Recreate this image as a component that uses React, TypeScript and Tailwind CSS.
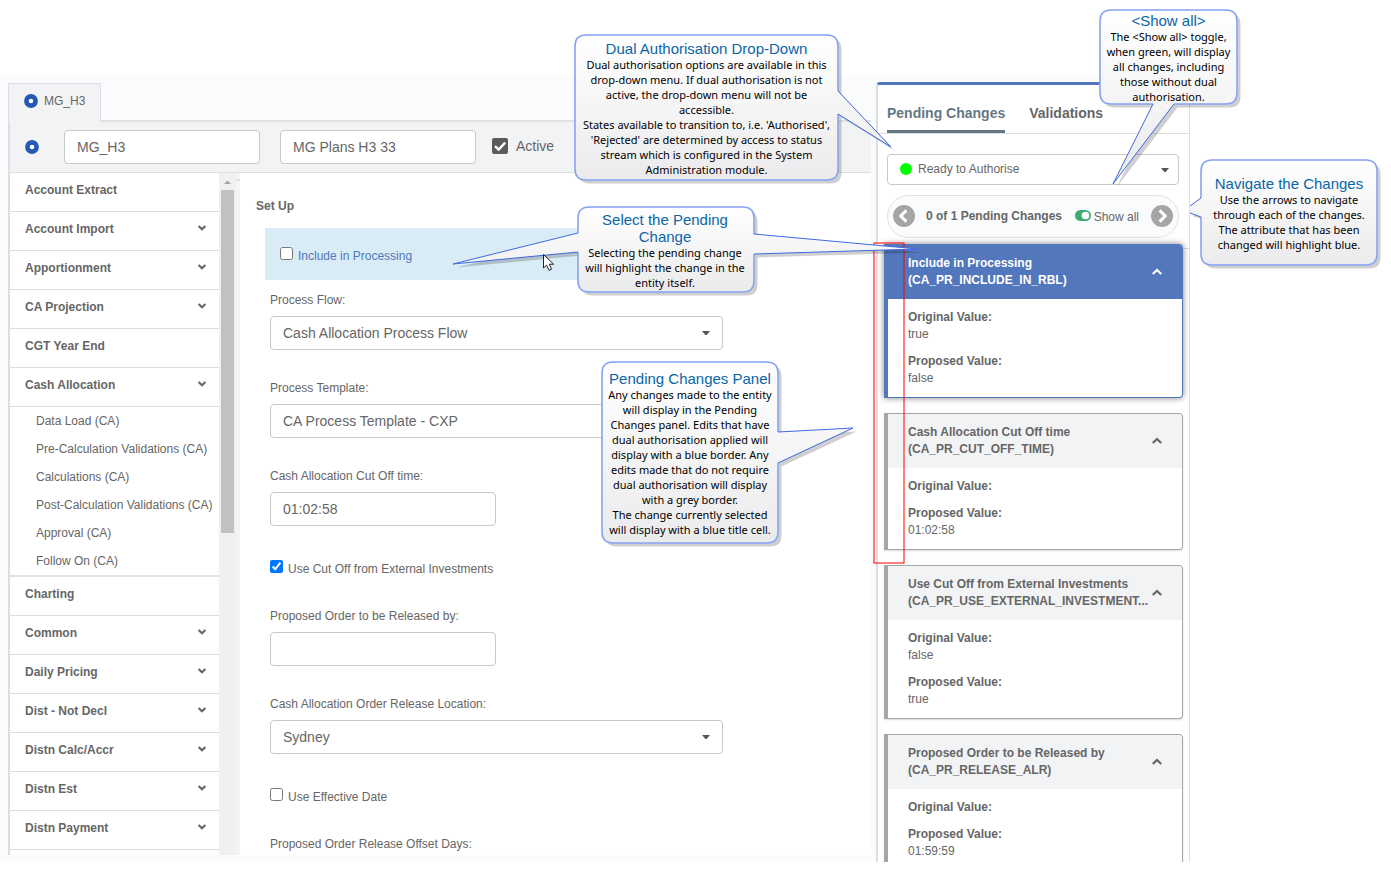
import React, { useId, useState } from "react";

const SANS = "font-['Liberation_Sans',Arial,sans-serif]";
const NOTE = "font-['Noto_Sans',Tahoma,sans-serif]";

type NavEntry = { label: string; expandable?: boolean; children?: string[] };

const NAV: NavEntry[] = [
  { label: "Account Extract" },
  { label: "Account Import", expandable: true },
  { label: "Apportionment", expandable: true },
  { label: "CA Projection", expandable: true },
  { label: "CGT Year End" },
  {
    label: "Cash Allocation",
    expandable: true,
    children: [
      "Data Load (CA)",
      "Pre-Calculation Validations (CA)",
      "Calculations (CA)",
      "Post-Calculation Validations (CA)",
      "Approval (CA)",
      "Follow On (CA)",
    ],
  },
  { label: "Charting" },
  { label: "Common", expandable: true },
  { label: "Daily Pricing", expandable: true },
  { label: "Dist - Not Decl", expandable: true },
  { label: "Distn Calc/Accr", expandable: true },
  { label: "Distn Est", expandable: true },
  { label: "Distn Payment", expandable: true },
  { label: "" },
];

type Change = { title: string; code: string; original: string; proposed: string; active?: boolean };

const CHANGES: Change[] = [
  { title: "Include in Processing", code: "(CA_PR_INCLUDE_IN_RBL)", original: "true", proposed: "false", active: true },
  { title: "Cash Allocation Cut Off time", code: "(CA_PR_CUT_OFF_TIME)", original: "", proposed: "01:02:58" },
  { title: "Use Cut Off from External Investments", code: "(CA_PR_USE_EXTERNAL_INVESTMENT...", original: "false", proposed: "true" },
  { title: "Proposed Order to be Released by", code: "(CA_PR_RELEASE_ALR)", original: "", proposed: "01:59:59" },
];

function Ring() {
  return (
    <svg className="size-3.5 shrink-0" viewBox="0 0 14 14" aria-hidden="true">
      <circle cx="7" cy="7" r="4.6" fill="#fff" stroke="#2459b3" strokeWidth="4.6" />
    </svg>
  );
}

function Chevron({ up = false }: { up?: boolean }) {
  return (
    <svg className={up ? "h-2 w-2.5 rotate-180" : "h-2 w-2.5"} viewBox="0 0 10 8" fill="none" stroke="currentColor" strokeWidth="2.2" aria-hidden="true">
      <path d={up ? "M0.8 2 L5 6 L9.2 2" : "M1.6 2 L5 5.2 L8.4 2"} />
    </svg>
  );
}

function Caret() {
  return (
    <svg className="pointer-events-none absolute right-[13px] top-1/2 h-1 w-2 -translate-y-1/2" viewBox="0 0 8 4" fill="#555" aria-hidden="true">
      <path d="M0 0 H8 L4.6 4 H3.4 Z" />
    </svg>
  );
}

const BOX = "block h-[34px] rounded-[4px] border border-[#c8c8c8] bg-white px-3 text-sm text-[#666] outline-none";

function TextField({ label, value }: { label: string; value: string }) {
  const id = useId();
  return (
    <div className="flex h-[88px] flex-col items-start gap-2">
      <label htmlFor={id} className="text-xs">{label}</label>
      <input id={id} type="text" defaultValue={value} className={`${BOX} w-[226px]`} />
    </div>
  );
}

function SelectField({ label, value }: { label: string; value: string }) {
  const id = useId();
  return (
    <div className="flex h-[88px] flex-col gap-2">
      <label htmlFor={id} className="text-xs">{label}</label>
      <div className="relative">
        <select id={id} className={`${BOX} w-full appearance-none`}>
          <option>{value}</option>
        </select>
        <Caret />
      </div>
    </div>
  );
}

function CheckField({ label, checked = false }: { label: string; checked?: boolean }) {
  return (
    <label className="flex h-[52px] items-start gap-[5px] pt-1 text-xs">
      <input type="checkbox" defaultChecked={checked} className="size-[13px] shrink-0" />
      <span className="pt-[1px]">{label}</span>
    </label>
  );
}

function SideNav() {
  return (
    <nav className="flex w-[230px] shrink-0 overflow-hidden bg-white">
      <ul className="min-w-0 flex-1">
        {NAV.map((n, i) => (
          <li key={i}>
            <button type="button" className="flex h-[39px] w-full items-center justify-between border-b border-[#dcdcdc] pb-1 pl-[15px] pr-3 text-left text-xs font-bold">
              <span>{n.label}</span>
              {n.expandable && <span className="pb-[3px]"><Chevron /></span>}
            </button>
            {n.children && (
              <ul className="border-b-2 border-[#e2e2e2]">
                {n.children.map((c) => (
                  <li key={c} className="flex h-7 items-center whitespace-nowrap pl-[26px] text-xs">
                    <a href="#">{c}</a>
                  </li>
                ))}
              </ul>
            )}
          </li>
        ))}
      </ul>
      <div className="flex w-[17px] flex-col items-center bg-[#f0f0f0]">
        <svg className="mb-[6px] mt-2 h-[3px] w-[7px]" viewBox="0 0 7 3" fill="#a3a3a3" aria-hidden="true">
          <path d="M0 3 L3 0 H4 L7 3 Z" />
        </svg>
        <div className="h-[343px] w-[13px] bg-[#c1c1c1]" />
      </div>
      <div className="w-1 bg-[#f3f4f7] pt-1.5">
        <div className="h-0.5 bg-[#e2e3e5]" />
      </div>
    </nav>
  );
}

function ChangeCard({ change }: { change: Change }) {
  const frame = change.active
    ? "relative border-[#5377bd] shadow-[0_0_6px_rgba(0,0,0,0.5)]"
    : "border-[#a6a6a6] shadow-[0_1px_2px_rgba(0,0,0,0.15)]";
  const head = change.active ? "bg-[#5377bd] text-white" : "bg-[#f2f3f5]";
  return (
    <article className={`shrink-0 overflow-hidden rounded-r-[4px] border border-l-4 bg-white text-xs leading-[17px] ${frame}`}>
      <button type="button" className={`flex w-full items-center justify-between py-2.5 pl-5 pr-5 text-left font-bold ${head}`}>
        <span className="w-[244px]">
          <span className="block">{change.title}</span>
          <span className="block whitespace-nowrap">{change.code}</span>
        </span>
        <span><Chevron up /></span>
      </button>
      <dl className="flex flex-col gap-2.5 py-2.5 pl-5">
        <div>
          <dt className="font-bold">Original Value:</dt>
          {change.original && <dd>{change.original}</dd>}
        </div>
        <div>
          <dt className="font-bold">Proposed Value:</dt>
          <dd>{change.proposed}</dd>
        </div>
      </dl>
    </article>
  );
}

function ArrowButton({ label, flip = false }: { label: string; flip?: boolean }) {
  return (
    <button type="button" aria-label={label} className="size-[22px] shrink-0">
      <svg className={flip ? "size-full rotate-180" : "size-full"} viewBox="0 0 22 22" aria-hidden="true">
        <circle cx="11" cy="11" r="11" fill="#a5a5a5" />
        <path d="M13.4 5.4 L7.8 11 L13.4 16.6" fill="none" stroke="#fff" strokeWidth="3" />
      </svg>
    </button>
  );
}

function PendingPanel() {
  const [showAll, setShowAll] = useState(true);
  return (
    <aside className="-mb-px mt-[7px] flex w-[314px] shrink-0 flex-col overflow-hidden rounded-tl-[4px] border-l-2 border-r border-t-[3px] border-l-[#dcdee1] border-r-[#dcdee1] border-t-[#5077bd] bg-white">
      <div role="tablist" className="flex h-[49px] shrink-0 items-stretch gap-6 border-b border-[#dcdee1] pl-[9px] text-sm font-bold">
        <button type="button" role="tab" aria-selected="true" className="border-b-[3px] border-[#667784] pb-1 pt-3.5 text-[#667784]">Pending Changes</button>
        <button type="button" role="tab" aria-selected="false" className="pb-[7px] pt-3.5">Validations</button>
      </div>
      <div className="flex shrink-0 flex-col gap-2.5 pl-[9px] pr-2.5 pt-5">
        <div className="relative">
          <span className="absolute left-[13px] top-[9px] size-3 rounded-full bg-[#00ff00]" />
          <select aria-label="Authorisation status" className="block h-[31px] w-full appearance-none rounded-[4px] border border-[#c8c8c8] bg-white pb-0.5 pl-[30px] text-xs text-[#666] outline-none">
            <option>Ready to Authorise</option>
          </select>
          <span className="absolute right-[-3px] top-0 h-[31px]"><Caret /></span>
        </div>
        <div className="flex h-[43px] items-center rounded-full border border-[#dfe1e4] bg-[#fafbfd] px-[5px] pb-0.5">
          <ArrowButton label="Previous change" />
          <span className="flex-1 whitespace-nowrap pl-[11px] text-xs font-bold">0 of 1 Pending Changes</span>
          <button type="button" role="switch" aria-checked={showAll} onClick={() => setShowAll(!showAll)} className="flex items-center gap-[3px] pr-3 text-xs">
            <svg className="h-[11px] w-4" viewBox="0 0 16 11" aria-hidden="true">
              <rect width="16" height="11" rx="5.5" fill={showAll ? "#3dab72" : "#a5a5a5"} />
              <circle cx={showAll ? 10.5 : 5.5} cy="5.5" r="3.8" fill="#fff" />
            </svg>
            <span className="pt-0.5">Show all</span>
          </button>
          <ArrowButton label="Next change" flip />
        </div>
      </div>
      <div className="mt-2.5 shrink-0 border-t border-[#dcdee1] px-1.5">
        <div className="-mt-[5px] flex flex-col gap-[15px]">
          {CHANGES.map((c) => <ChangeCard key={c.code} change={c} />)}
        </div>
      </div>
    </aside>
  );
}

type Shape = { outline: string; body: string; tails: string[] };

const SHAPES: Shape[] = [
  {
    outline: "M838 91 V46 Q838 35 827 35 H586 Q575 35 575 46 V169 Q575 180 586 180 H827 Q838 180 838 169 V114 L891 147 Z",
    body: "M838 91 V46 Q838 35 827 35 H586 Q575 35 575 46 V169 Q575 180 586 180 H827 Q838 180 838 169 V114",
    tails: ["M838 91 L891 147 L838 114"],
  },
  {
    outline: "M754 234 V218 Q754 207 743 207 H589 Q578 207 578 218 V233 L453 264 L578 252 V281 Q578 292 589 292 H743 Q754 292 754 281 V254 L918 249 Z",
    body: "M754 234 V218 Q754 207 743 207 H589 Q578 207 578 218 V233 M578 252 V281 Q578 292 589 292 H743 Q754 292 754 281 V254",
    tails: ["M578 233 L453 264 L578 252", "M754 234 L918 249 L754 254"],
  },
  {
    outline: "M778 432 V373 Q778 362 767 362 H613 Q602 362 602 373 V532 Q602 543 613 543 H767 Q778 543 778 532 V463 L853 428 Z",
    body: "M778 432 V373 Q778 362 767 362 H613 Q602 362 602 373 V532 Q602 543 613 543 H767 Q778 543 778 532 V463",
    tails: ["M778 432 L853 428 L778 463"],
  },
  {
    outline: "M1153 104 H1111 Q1100 104 1100 93 V21 Q1100 10 1111 10 H1226 Q1237 10 1237 21 V93 Q1237 104 1226 104 H1174 L1113 184 Z",
    body: "M1153 104 H1111 Q1100 104 1100 93 V21 Q1100 10 1111 10 H1226 Q1237 10 1237 21 V93 Q1237 104 1226 104 H1174",
    tails: ["M1153 104 L1113 184 L1174 104"],
  },
  {
    outline: "M1201 198 V171 Q1201 160 1212 160 H1366 Q1377 160 1377 171 V254 Q1377 265 1366 265 H1212 Q1201 265 1201 254 V217 L1190 213 V206 Z",
    body: "M1201 198 V171 Q1201 160 1212 160 H1366 Q1377 160 1377 171 V254 Q1377 265 1366 265 H1212 Q1201 265 1201 254 V217",
    tails: ["M1201 198 L1190 206", "M1190 213 L1201 217"],
  },
];

function CalloutShapes() {
  return (
    <svg className="pointer-events-none absolute left-0 top-0 h-[872px] w-[1391px]" viewBox="0 0 1391 872" fill="none" aria-hidden="true">
      <defs>
        <linearGradient id="note" x1="0" y1="0" x2="0" y2="1">
          <stop offset="0" stopColor="#ffffff" />
          <stop offset="1" stopColor="#ebebed" />
        </linearGradient>
      </defs>
      <rect x="874" y="243" width="30" height="320" stroke="#ff0000" strokeWidth="1" />
      {SHAPES.map((s) => (
        <g key={s.body}>
          <path d={s.outline} transform="translate(3.5 3.5)" fill="#000" fillOpacity="0.19" />
          <path d={s.outline} fill="url(#note)" />
          <path d={s.body} stroke="#9db4f5" strokeWidth="1.6" />
          <path d={s.body} stroke="#6a8aea" strokeWidth="0.5" />
          {s.tails.map((t) => <path key={t} d={t} stroke="#4068e0" strokeWidth="1" />)}
        </g>
      ))}
      <path d="M543.5 254.5 V268 L546.6 265.1 L549 270.4 L551.6 269.2 L549.3 264.2 H553.6 Z" fill="#fff" stroke="#222" />
    </svg>
  );
}

function Note({ place, title, lines }: { place: string; title: string[]; lines: string[] }) {
  return (
    <section className={`absolute flex flex-col items-center whitespace-nowrap text-center ${place}`}>
      <h2 className="text-[15px] leading-[17px] text-[#0a66a6]">
        {title.map((t) => <span key={t} className="block">{t}</span>)}
      </h2>
      <p className={`text-[11px] leading-[15px] text-black ${NOTE}`}>
        {lines.map((t) => <span key={t} className="block">{t}</span>)}
      </p>
    </section>
  );
}

export default function App() {
  return (
    <div className={`relative min-h-screen overflow-hidden bg-white pt-[75px] text-[#666] ${SANS}`}>
      <div className="mr-[201px] flex h-[calc(100vh-86px)] gap-[5px] bg-[#fafbfd]">
        <main className="flex min-w-0 flex-1 flex-col pb-1.5 pl-2 pt-2">
          <div className="flex shrink-0">
            <div className="flex h-[39px] w-[93px] items-center gap-1.5 border border-b-0 border-[#dcdee1] bg-[#f2f3f5] pb-1 pl-[15px] text-xs">
              <Ring />
              <span>MG_H3</span>
            </div>
            <div className="flex-1 border-b-2 border-[#dfe1e3]" />
          </div>
          <div className="flex min-h-0 flex-1 flex-col border-l-2 border-[#dcdee1]">
            <header className="flex h-[51px] shrink-0 items-center border-b border-[#dcdee1] bg-[#f2f3f5] pl-[15px]">
              <Ring />
              <input aria-label="Code" defaultValue="MG_H3" className={`${BOX} ml-[25px] w-[196px]`} />
              <input aria-label="Name" defaultValue="MG Plans H3 33" className={`${BOX} ml-5 w-[196px]`} />
              <label className="relative ml-4 flex items-center gap-2 pb-0.5 text-sm">
                <input type="checkbox" defaultChecked className="size-4 appearance-none rounded-[2px] bg-[#5b5b5b]" />
                <svg className="pointer-events-none absolute left-0 size-4" viewBox="0 0 16 16" fill="none" stroke="#fff" strokeWidth="2.4" aria-hidden="true">
                  <path d="M3 8.2 L6.6 11.6 L13.2 4.6" />
                </svg>
                <span>Active</span>
              </label>
            </header>
            <div className="flex min-h-0 flex-1">
              <SideNav />
              <form className="min-w-0 flex-1 overflow-hidden bg-white pl-4 pt-[25px]">
                <h1 className="text-xs font-bold">Set Up</h1>
                <div className="ml-[9px] mt-3.5 w-[463px]">
                  <label className="flex h-[52px] items-center gap-[5px] bg-[#d9ebf4] pl-[15px] text-xs text-[#5078bd]">
                    <input type="checkbox" className="mb-[2px] size-[13px]" />
                    <span className="pt-[3px]">Include in Processing</span>
                  </label>
                  <div className="px-[5px] pt-3">
                    <SelectField label="Process Flow:" value="Cash Allocation Process Flow" />
                    <SelectField label="Process Template:" value="CA Process Template - CXP" />
                    <TextField label="Cash Allocation Cut Off time:" value="01:02:58" />
                    <CheckField label="Use Cut Off from External Investments" checked />
                    <TextField label="Proposed Order to be Released by:" value="" />
                    <SelectField label="Cash Allocation Order Release Location:" value="Sydney" />
                    <CheckField label="Use Effective Date" />
                    <p className="text-xs">Proposed Order Release Offset Days:</p>
                  </div>
                </div>
              </form>
            </div>
          </div>
        </main>
        <PendingPanel />
      </div>

      <CalloutShapes />
      <Note
        place="left-[575px] top-[40px] w-[263px]"
        title={["Dual Authorisation Drop-Down"]}
        lines={[
          "Dual authorisation options are available in this",
          "drop-down menu. If dual authorisation is not",
          "active, the drop-down menu will not be",
          "accessible.",
          "States available to transition to, i.e. 'Authorised',",
          "'Rejected' are determined by access to status",
          "stream which is configured in the System",
          "Administration module.",
        ]}
      />
      <Note
        place="left-[577px] top-[211px] w-[176px]"
        title={["Select the Pending", "Change"]}
        lines={["Selecting the pending change", "will highlight the change in the", "entity itself."]}
      />
      <Note
        place="left-[602px] top-[370px] w-[176px]"
        title={["Pending Changes Panel"]}
        lines={[
          "Any changes made to the entity",
          "will display in the Pending",
          "Changes panel. Edits that have",
          "dual authorisation applied will",
          "display with a blue border. Any",
          "edits made that do not require",
          "dual authorisation will display",
          "with a grey border.",
          "The change currently selected",
          "will display with a blue title cell.",
        ]}
      />
      <Note
        place="left-[1100px] top-[12px] w-[137px]"
        title={["<Show all>"]}
        lines={["The <Show all> toggle,", "when green, will display", "all changes, including", "those without dual", "authorisation."]}
      />
      <Note
        place="left-[1201px] top-[175px] w-[176px]"
        title={["Navigate the Changes"]}
        lines={["Use the arrows to navigate", "through each of the changes.", "The attribute that has been", "changed will highlight blue."]}
      />
    </div>
  );
}
